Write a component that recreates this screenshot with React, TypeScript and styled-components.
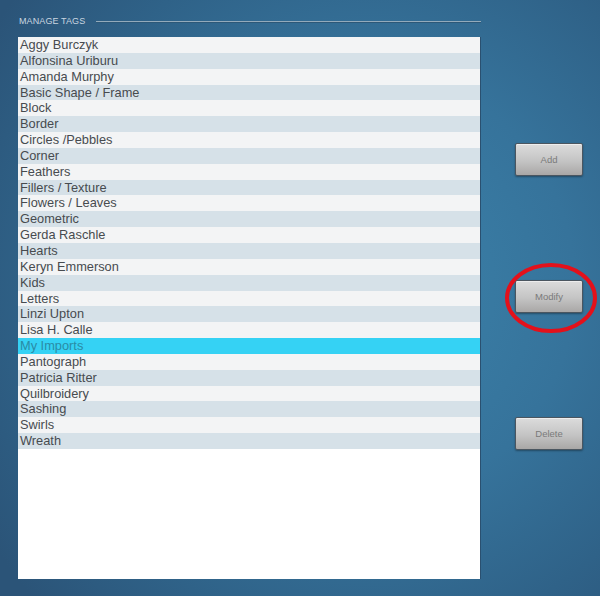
import styled, { createGlobalStyle } from 'styled-components';

const tags = [
    'Aggy Burczyk',
    'Alfonsina Uriburu',
    'Amanda Murphy',
    'Basic Shape / Frame',
    'Block',
    'Border',
    'Circles /Pebbles',
    'Corner',
    'Feathers',
    'Fillers / Texture',
    'Flowers / Leaves',
    'Geometric',
    'Gerda Raschle',
    'Hearts',
    'Keryn Emmerson',
    'Kids',
    'Letters',
    'Linzi Upton',
    'Lisa H. Calle',
    'My Imports',
    'Pantograph',
    'Patricia Ritter',
    'Quilbroidery',
    'Sashing',
    'Swirls',
    'Wreath',
];

const selectedTag = 'My Imports';

const GlobalStyle = createGlobalStyle`
    html, body {
        margin: 0;
        padding: 0;
    }
    body {
        font-family: 'Liberation Sans', Arial, sans-serif;
    }
`;

const App = () => {
    return (
        <>
            <GlobalStyle />
            <Page>
                <LeftColumn>
                    <Header>
                        <Title>MANAGE TAGS</Title>
                        <Rule />
                    </Header>
                    <TagList>
                        {tags.map((tag, index) => (
                            <TagRow
                                key={tag}
                                $odd={index % 2 === 1}
                                $selected={tag === selectedTag}
                            >
                                {tag}
                            </TagRow>
                        ))}
                    </TagList>
                </LeftColumn>
                <ButtonColumn>
                    <Button>Add</Button>
                    <Highlighted>
                        <Button>Modify</Button>
                        <Ring viewBox="0 0 96 74">
                            <ellipse
                                cx="48"
                                cy="37"
                                rx="44"
                                ry="33"
                                fill="none"
                                stroke="#e3111b"
                                strokeWidth="4"
                            />
                        </Ring>
                    </Highlighted>
                    <Button>Delete</Button>
                </ButtonColumn>
            </Page>
        </>
    );
};

export default App;

const Page = styled.div`
    width: 600px;
    height: 596px;
    display: flex;
    box-sizing: border-box;
    padding: 16px 0 0 18px;
    overflow: hidden;
    background: radial-gradient(
        ellipse 75% 80% at 62% 48%,
        #3b82aa 0%,
        #36739b 45%,
        #2f6288 75%,
        #2b5478 100%
    );
`;

const LeftColumn = styled.div`
    width: 463px;
    display: flex;
    flex-direction: column;
`;

const Header = styled.div`
    display: flex;
    align-items: center;
    gap: 11px;
    height: 10px;
    margin-bottom: 11px;
`;

const Title = styled.div`
    font-size: 9px;
    color: #c9d6e0;
    letter-spacing: 0.1px;
    white-space: nowrap;
    padding-left: 1px;
`;

const Rule = styled.div`
    flex-grow: 1;
    height: 0;
    border-top: 1px solid #93aabb;
    border-bottom: 1px solid #2c5878;
    margin-top: 1px;
`;

const TagList = styled.div`
    height: 542px;
    background-color: #ffffff;
    border-right: 1px solid #2a5070;
    box-sizing: border-box;
`;

const TagRow = styled.div<{ $odd: boolean; $selected: boolean }>`
    height: 15.85px;
    line-height: 16px;
    padding-left: 2px;
    font-size: 12.8px;
    white-space: nowrap;
    overflow: hidden;
    color: ${(props) => (props.$selected ? '#2a8ca6' : '#474b4f')};
    background-color: ${(props) =>
        props.$selected ? '#35d2f4' : props.$odd ? '#d6e1e8' : '#f3f4f5'};
`;

const ButtonColumn = styled.div`
    display: flex;
    flex-direction: column;
    gap: 104px;
    padding: 127px 0 0 34px;
`;

const Button = styled.button`
    width: 68px;
    height: 33px;
    padding: 0;
    border: 1px solid #4b5660;
    border-radius: 2px;
    background: linear-gradient(#dcdcdc 0%, #c4c4c4 55%, #a9a7a6 100%);
    box-shadow: inset 0 1px 0 rgba(255, 255, 255, 0.5),
        0 1px 2px rgba(0, 0, 0, 0.35);
    font-family: 'Liberation Sans', Arial, sans-serif;
    font-size: 9.5px;
    color: #7a7a7a;
    cursor: pointer;
`;

const Highlighted = styled.div`
    position: relative;
    width: 68px;
    height: 33px;
`;

const Ring = styled.svg`
    position: absolute;
    left: -12px;
    top: -19px;
    width: 96px;
    height: 74px;
    pointer-events: none;
`;
